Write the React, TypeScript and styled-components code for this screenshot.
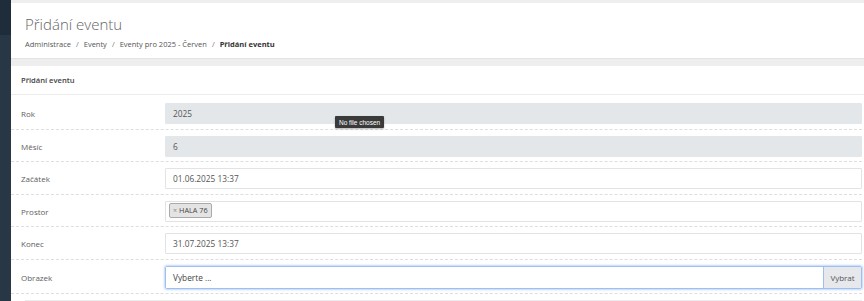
import styled, { createGlobalStyle } from 'styled-components';

const GlobalStyle = createGlobalStyle`
  html, body {
    margin: 0;
    padding: 0;
    background: #eeeeee;
    font-family: 'Open Sans', 'Liberation Sans', sans-serif;
    color: #555;
  }
  * { box-sizing: border-box; }
`;

type Field = {
  label: string;
  value?: string;
  kind: 'readonly' | 'text' | 'tags' | 'file';
};

const FIELDS: Field[] = [
  { label: 'Rok', value: '2025', kind: 'readonly' },
  { label: 'Měsíc', value: '6', kind: 'readonly' },
  { label: 'Začátek', value: '01.06.2025 13:37', kind: 'text' },
  { label: 'Prostor', value: 'HALA 76', kind: 'tags' },
  { label: 'Konec', value: '31.07.2025 13:37', kind: 'text' },
  { label: 'Obrazek', value: 'Vyberte ...', kind: 'file' },
];

const App = () => {
  const rows = FIELDS.map((field) => {
    let control;
    if (field.kind === 'tags') {
      control = (
        <TagBox>
          <Tag>
            <TagRemove>×</TagRemove>
            {field.value}
          </Tag>
        </TagBox>
      );
    } else if (field.kind === 'file') {
      control = (
        <FileGroup>
          <FileInput>{field.value}</FileInput>
          <FileButton type='button'>Vybrat</FileButton>
        </FileGroup>
      );
    } else {
      control = <Input $readonly={field.kind === 'readonly'}>{field.value}</Input>;
    }

    return (
      <Row key={field.label}>
        <Label>{field.label}</Label>
        {control}
      </Row>
    );
  });

  return (
    <>
      <GlobalStyle />
      <Layout>
        <Sidebar>
          <SidebarBrand />
        </Sidebar>
        <Main>
          <PageHeader>
            <Title>Přidání eventu</Title>
            <Breadcrumb>
              <Crumb>Administrace</Crumb>
              <Sep>/</Sep>
              <Crumb>Eventy</Crumb>
              <Sep>/</Sep>
              <Crumb>Eventy pro 2025 - Červen</Crumb>
              <Sep>/</Sep>
              <Crumb $active>Přidání eventu</Crumb>
            </Breadcrumb>
          </PageHeader>
          <Card>
            <CardHeader>Přidání eventu</CardHeader>
            <CardBody>
              {rows}
              <NextRow />
            </CardBody>
          </Card>
        </Main>
      </Layout>
      <Tooltip>No file chosen</Tooltip>
    </>
  );
};

const Layout = styled.div`
  display: flex;
  height: 301px;
  overflow: hidden;
`;

const Sidebar = styled.div`
  width: 11px;
  flex-shrink: 0;
  background: #283746;
  display: flex;
  flex-direction: column;
`;

const SidebarBrand = styled.div`
  height: 35px;
  background: #1f2c39;
`;

const Main = styled.div`
  flex: 1;
  padding-top: 3px;
  display: flex;
  flex-direction: column;
  gap: 7px;
`;

const PageHeader = styled.div`
  flex-shrink: 0;
  background: #fff;
  height: 56px;
  padding: 11px 14px 0;
  border-bottom: 1px solid #e4e4e4;
`;

const Title = styled.h1`
  margin: 0;
  font-size: 15px;
  font-weight: 300;
  line-height: 20px;
  color: #666;
`;

const Breadcrumb = styled.div`
  margin-top: 4px;
  display: flex;
  align-items: center;
  gap: 5px;
  font-size: 7.5px;
  line-height: 12px;
  color: #555;
`;

const Crumb = styled.span<{ $active?: boolean }>`
  font-weight: ${(p) => (p.$active ? 700 : 400)};
  color: ${(p) => (p.$active ? '#333' : '#555')};
`;

const Sep = styled.span`
  color: #777;
`;

const Card = styled.div`
  flex-shrink: 0;
  background: #fff;
`;

const CardHeader = styled.div`
  height: 29px;
  display: flex;
  align-items: center;
  padding: 0 10px;
  font-size: 7.6px;
  font-weight: 600;
  color: #444;
  border-bottom: 1px solid #ececec;
`;

const CardBody = styled.div`
  margin-right: 2px;
  padding-top: 2px;
`;

const Row = styled.div`
  display: grid;
  grid-template-columns: 154px 1fr;
  align-items: center;
  padding: 6px 0 4.5px;
  border-bottom: 1px dashed #dedede;
`;

const Label = styled.div`
  padding-left: 10px;
  font-size: 8px;
  color: #606060;
`;

const Input = styled.div<{ $readonly?: boolean }>`
  height: 21px;
  display: flex;
  align-items: center;
  padding: 0 7px;
  font-size: 8.3px;
  color: #555;
  background: ${(p) => (p.$readonly ? '#e4e7ea' : '#fff')};
  border: 1px solid ${(p) => (p.$readonly ? '#e4e7ea' : '#e3e3e3')};
  border-radius: 1px;
`;

const TagBox = styled.div`
  height: 21px;
  padding: 1px 3px;
  border: 1px solid #e3e3e3;
  border-radius: 1px;
  background: #fff;
  display: flex;
  align-items: flex-start;
`;

const Tag = styled.span`
  display: inline-flex;
  align-items: center;
  gap: 2px;
  height: 15px;
  padding: 0 3px;
  background: #e4e4e4;
  border: 1px solid #aaa;
  border-radius: 2px;
  font-size: 7.3px;
  font-weight: 400;
  color: #444;
`;

const TagRemove = styled.span`
  color: #888;
  font-size: 7px;
`;

const FileGroup = styled.div`
  display: flex;
  height: 23px;
  border: 1px solid #9ec0f0;
  border-radius: 2px;
  box-shadow: 0 0 2px 1px rgba(120, 165, 235, 0.45);
`;

const FileInput = styled.div`
  flex: 1;
  display: flex;
  align-items: center;
  padding: 0 7px;
  font-size: 8.3px;
  color: #444;
  background: #fff;
`;

const FileButton = styled.button`
  width: 38px;
  border: none;
  border-left: 1px solid #9ec0f0;
  background: #e6e8eb;
  color: #555;
  font-family: inherit;
  font-size: 8px;
  padding: 0;
`;

const NextRow = styled.div`
  margin: 6px 0 0 14px;
  height: 10px;
  border-top: 1px solid #ececec;
`;

const Tooltip = styled.div`
  position: absolute;
  left: 335px;
  top: 116px;
  height: 12px;
  padding: 0 4px;
  display: flex;
  align-items: center;
  background: #3a3a3a;
  color: #fff;
  font-family: 'Liberation Sans', Arial, sans-serif;
  font-size: 6.5px;
  border-radius: 1px;
  box-shadow: 0 1px 2px rgba(0, 0, 0, 0.3);
`;

export default App;
